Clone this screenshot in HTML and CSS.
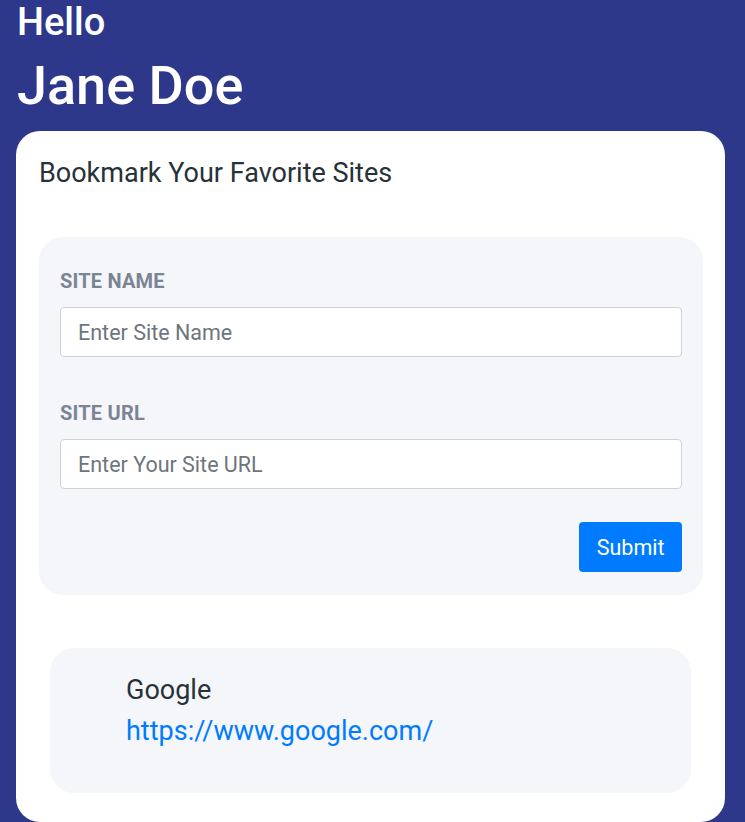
FILE: index.html
```html
<!DOCTYPE html>
<html lang="en">
<head>
<meta charset="utf-8">
<title>Bookmarks</title>
<link rel="stylesheet" href="styles.css">
</head>
<body>
  <div class="page">
    <h1 class="hello">Hello</h1>
    <h1 class="name">Jane Doe</h1>
    <div class="card">
      <h2 class="card-title">Bookmark Your Favorite Sites</h2>
      <form class="form-box">
        <label class="label" for="siteName">SITE NAME</label>
        <input class="input" id="siteName" type="text" placeholder="Enter Site Name">
        <label class="label label-second" for="siteUrl">SITE URL</label>
        <input class="input" id="siteUrl" type="text" placeholder="Enter Your Site URL">
        <div class="actions">
          <button class="btn" type="button">Submit</button>
        </div>
      </form>
      <div class="bookmark">
        <p class="bm-name">Google</p>
        <a class="bm-link" href="#">https://www.google.com/</a>
      </div>
    </div>
  </div>
</body>
</html>
```
FILE: styles.css
```css
* { box-sizing: border-box; }
html, body { margin: 0; padding: 0; }
body {
  background: #2d388a;
  font-family: Roboto, "Noto Sans", Arial, sans-serif;
  height: 822px;
  overflow: hidden;
}
.page {
  padding: 0 20px 0 16px;
}
.hello {
  margin: 0;
  padding-left: 1px;
  color: #ffffff;
  font-size: 38px;
  font-weight: 500;
  line-height: normal;
}
.name {
  margin: 10px 0 0 0;
  padding-left: 1px;
  color: #ffffff;
  font-size: 54px;
  font-weight: 500;
  line-height: normal;
}
.card {
  margin-top: 14px;
  background: #ffffff;
  border-radius: 24px;
  padding: 26px 22px 29px 23px;
  height: 691px;
}
.card-title {
  margin: 0;
  font-size: 27px;
  font-weight: 400;
  color: #263238;
  line-height: normal;
}
.form-box {
  margin-top: 48px;
  background: #f5f6fa;
  border-radius: 24px;
  padding: 32px 21px 23px 21px;
  display: flex;
  flex-direction: column;
}
.label {
  font-size: 20px;
  font-weight: 700;
  color: #7b8494;
  line-height: normal;
  letter-spacing: 0.2px;
}
.label-second { margin-top: 44px; }
.input {
  margin-top: 14px;
  height: 50px;
  width: 100%;
  border: 1px solid #ced2d8;
  border-radius: 4px;
  background: #ffffff;
  padding: 0 17px;
  font-family: Roboto, "Noto Sans", Arial, sans-serif;
  font-size: 21.5px;
  color: #333;
  outline: none;
}
.input::placeholder { color: #6c757d; }
.actions {
  margin-top: 33px;
  display: flex;
  justify-content: flex-end;
}
.btn {
  height: 50px;
  padding: 0 17.5px;
  background: #007bff;
  color: #ffffff;
  border: none;
  border-radius: 4px;
  font-family: Roboto, "Noto Sans", Arial, sans-serif;
  font-size: 21.5px;
  font-weight: 400;
}
.bookmark {
  margin: 53px 12px 0 11px;
  background: #f5f6fa;
  border-radius: 24px;
  height: 145px;
  padding: 26px 20px 0 76px;
  display: flex;
  flex-direction: column;
}
.bm-name {
  margin: 0;
  font-size: 27px;
  color: #263238;
  line-height: normal;
}
.bm-link {
  margin-top: 9px;
  font-size: 27px;
  color: #007bff;
  text-decoration: none;
  line-height: normal;
}
```
